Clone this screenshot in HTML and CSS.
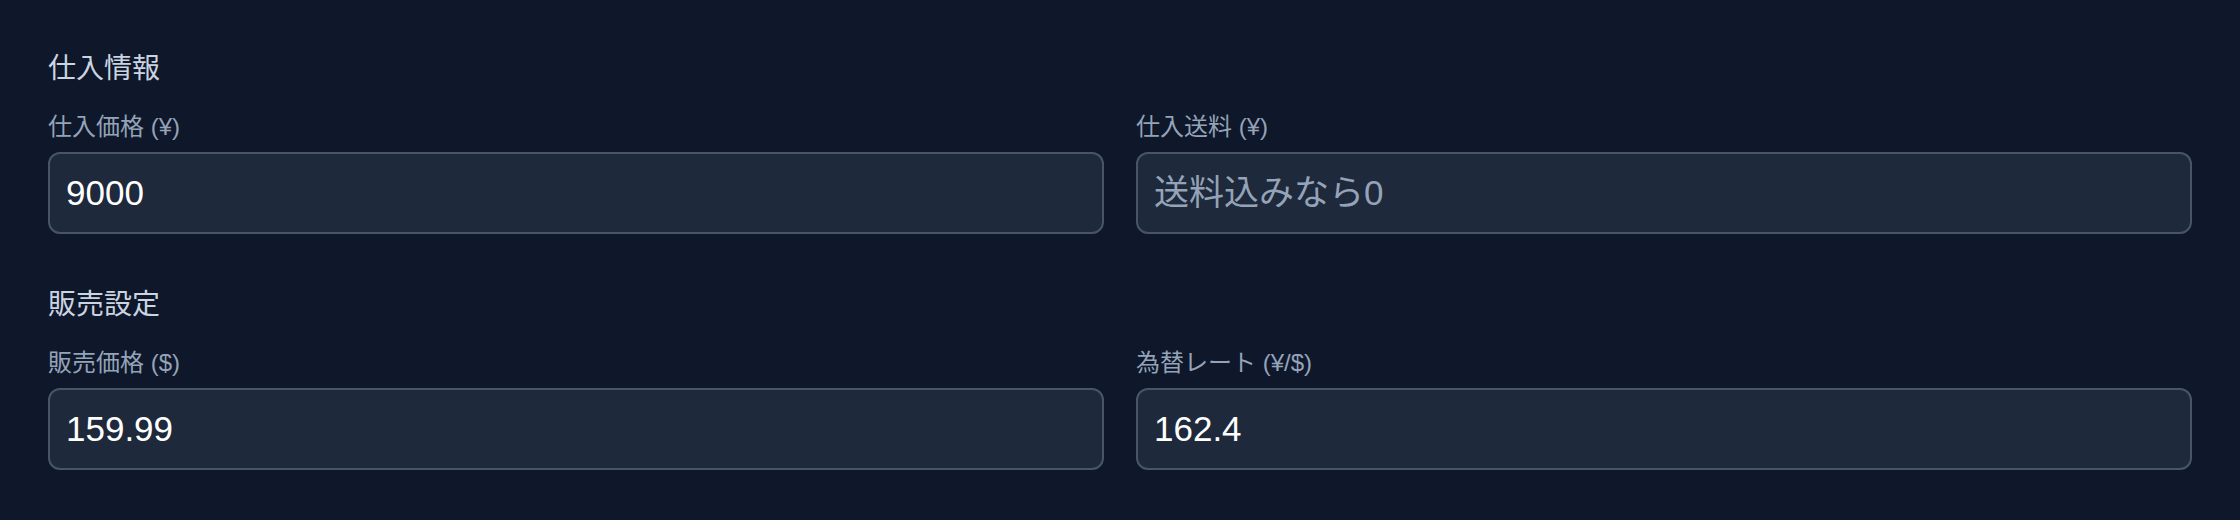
FILE: index.html
```html
<!DOCTYPE html>
<html lang="ja">
<head>
<meta charset="utf-8">
<title>仕入・販売設定</title>
<link rel="stylesheet" href="styles.css">
</head>
<body>
<main class="page">
  <section class="section">
    <h2 class="section-title">仕入情報</h2>
    <div class="grid">
      <label class="field">
        <span class="field-label">仕入価格 (¥)</span>
        <input class="field-input" type="text" value="9000">
      </label>
      <label class="field">
        <span class="field-label">仕入送料 (¥)</span>
        <input class="field-input" type="text" placeholder="送料込みなら0">
      </label>
    </div>
  </section>
  <section class="section">
    <h2 class="section-title">販売設定</h2>
    <div class="grid">
      <label class="field">
        <span class="field-label">販売価格 ($)</span>
        <input class="field-input" type="text" value="159.99">
      </label>
      <label class="field">
        <span class="field-label">為替レート (¥/$)</span>
        <input class="field-input" type="text" value="162.4">
      </label>
    </div>
  </section>
</main>
</body>
</html>
```

FILE: styles.css
```css
* {
  box-sizing: border-box;
}

html, body {
  margin: 0;
  padding: 0;
  background: #0f172a;
}

body {
  font-family: "Liberation Sans", "Noto Sans CJK JP", sans-serif;
  color: #e2e8f0;
}

.page {
  padding: 49px 48px 48px 48px;
  display: flex;
  flex-direction: column;
  gap: 51px;
}

.section {
  display: flex;
  flex-direction: column;
}

.section-title {
  margin: 0 0 22px 0;
  font-size: 28px;
  line-height: 40px;
  font-weight: 400;
  color: #cbd5e1;
}

.grid {
  display: grid;
  grid-template-columns: 1fr 1fr;
  gap: 32px;
}

.field {
  display: flex;
  flex-direction: column;
}

.field-label {
  font-size: 24px;
  line-height: 32px;
  color: #94a3b8;
  margin-bottom: 9px;
}

.field-input {
  height: 82px;
  width: 100%;
  padding: 0 16px;
  border: 2px solid #475569;
  border-radius: 12px;
  background: #1e293b;
  color: #ffffff;
  font-family: "Liberation Sans", "Noto Sans CJK JP", sans-serif;
  font-size: 35px;
  outline: none;
}

.field-input::placeholder {
  color: #94a3b8;
  opacity: 1;
}
```
